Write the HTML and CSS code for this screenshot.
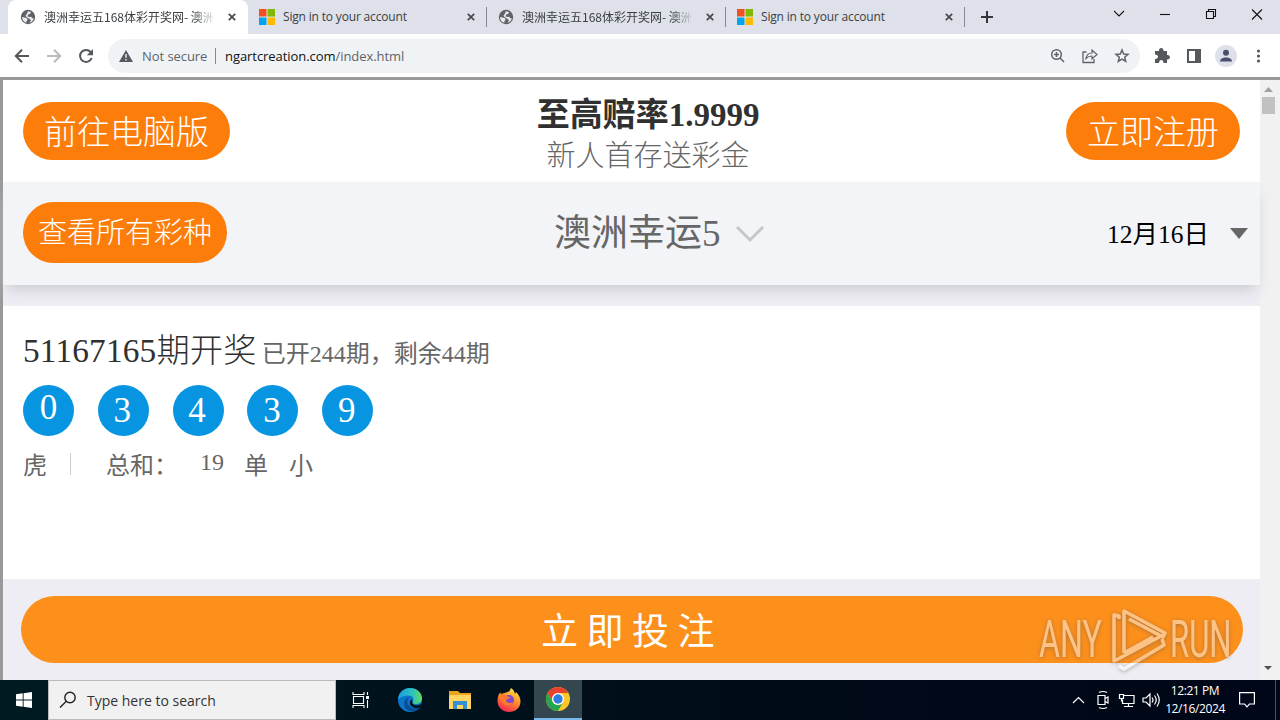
FILE: index.html
```html
<!DOCTYPE html>
<html lang="zh">
<head>
<meta charset="utf-8">
<title>澳洲幸运五168体彩开奖网</title>
<link rel="stylesheet" href="styles.css">
</head>
<body>
<svg class="defs" width="0" height="0">
  <symbol id="globe" viewBox="0 0 16 16"><circle cx="8" cy="8" r="7.2" fill="#5f6368"/><path d="M2.200 8 4.500 8.600 7 9.200 7.600 11 6.400 12 6.400 13.800C3.800 13 2 11 2.200 8ZM8 2.200 11 3 10 5 8 5.500 7.600 7.500 9.500 8 11.500 7.700 12 9.300 13.800 9.300C13.200 12 11.500 13.500 9.500 13.800L11 11.500 9.500 9.800 7 8.500 5.500 6.800 7 4.500Z" fill="#e8eaed"/></symbol>
  <symbol id="ms" viewBox="0 0 16 16"><path d="M0 0h7.500v7.500H0z" fill="#f25022"/><path d="M8.500 0H16v7.500H8.500z" fill="#7fba00"/><path d="M0 8.500h7.500V16H0z" fill="#00a4ef"/><path d="M8.500 8.500H16V16H8.500z" fill="#ffb900"/></symbol>
  <symbol id="x" viewBox="0 0 8 8"><path d="M.8.800 7.200 7.200M7.200.8.800 7.200" stroke="#45494d" stroke-width="1.700"/></symbol>
</svg>

<header class="tabs">
  <div class="tab active"><svg class="fav"><use href="#globe"/></svg><span class="title cjk">澳洲幸运五168体彩开奖网- 澳洲</span><svg class="close"><use href="#x"/></svg></div>
  <div class="tab"><svg class="fav"><use href="#ms"/></svg><span class="title">Sign in to your account</span><svg class="close"><use href="#x"/></svg></div>
  <div class="tab"><svg class="fav"><use href="#globe"/></svg><span class="title cjk">澳洲幸运五168体彩开奖网- 澳洲</span><svg class="close"><use href="#x"/></svg></div>
  <div class="tab"><svg class="fav"><use href="#ms"/></svg><span class="title">Sign in to your account</span><svg class="close"><use href="#x"/></svg></div>
  <svg class="plus" viewBox="0 0 12 12"><path d="M6 0v12M0 6h12" stroke="#33373b" stroke-width="2"/></svg>
  <svg class="winctl" width="166" height="34" viewBox="0 0 166 34" fill="none" stroke="#111" stroke-width="1.100"><path d="M0 11l5 5 5-5"/><path d="M46 14.500h10"/><path d="M92.500 11.500h7v7h-7zM94.500 11.500v-2h7v7h-2"/><path d="M138 9.500l10 10M148 9.500l-10 10"/></svg>
</header>

<nav class="toolbar">
  <svg class="navicons" width="80" height="20" viewBox="0 0 80 20" fill="none" stroke-width="2"><path d="M15 10H2M8 3.800 1.800 10 8 16.200" stroke="#54585c"/><path d="M33 10h13M40 3.800 46.200 10 40 16.200" stroke="#b9bbbe"/><path d="M77 6.500A6 6 0 1 0 77.700 12" stroke="#54585c"/><path d="M79 3v6.200h-6.200z" fill="#54585c"/></svg>
  <div class="omni">
    <svg width="14" height="12" viewBox="0 0 14 12"><path d="M7 0l7 12H0z" fill="#55595d"/><path d="M7 4v3.800M7 9v1.500" stroke="#f1f3f4" stroke-width="1.400"/></svg>
    <span class="secure">Not secure</span><i class="bar"></i><span class="host">ngartcreation.com</span><span class="path">/index.html</span>
    <svg class="omniicons" width="80" height="16" viewBox="0 0 80 16" fill="none" stroke="#5f6368" stroke-width="1.500"><circle cx="6.500" cy="6.500" r="4.800"/><path d="M10 10l4 4M4 6.500h5M6.500 4v5"/><path d="M36.500 4H33v10.500h11V11" stroke-width="1.300"/><path d="M36 10.500c.5-4 3-5.500 6-5.500V2l5 4.500L42 11V8c-3 0-4.500.8-6 2.500z" stroke-width="1.200"/><path d="M72 2l1.700 4 4.300.4-3.300 2.800 1 4.300-3.700-2.300-3.700 2.300 1-4.300-3.300-2.800 4.300-.4z"/></svg>
  </div>
  <svg class="actions" width="110" height="22" viewBox="0 0 110 22"><path d="M1 6h4c-.5-4 5-4 4.500 0H13v4c4-.5 4 5 0 4.500V18H9.500c0-4-4.500-4-4.500 0H1v-4c4 0 4-4.500 0-4.500z" fill="#54585c"/><path d="M34 5h12v12h-12z" fill="none" stroke="#54585c" stroke-width="2"/><path d="M41 5h5v12h-5z" fill="#54585c"/><circle cx="72" cy="11" r="11" fill="#dee1e9"/><circle cx="72" cy="7.800" r="3" fill="#4a4e6a"/><path d="M66 16.500c0-5.500 12-5.500 12 0z" fill="#4a4e6a"/><g fill="#54585c"><circle cx="104.500" cy="6" r="1.600"/><circle cx="104.500" cy="11" r="1.600"/><circle cx="104.500" cy="16" r="1.600"/></g></svg>
</nav>

<main class="frame">
  <div class="page">
    <section class="top">
      <a class="pill desktop">前往电脑版</a>
      <div class="promo"><b>至高赔率1.9999</b><span>新人首存送彩金</span></div>
      <a class="pill register">立即注册</a>
    </section>
    <section class="picker">
      <a class="pill all">查看所有彩种</a>
      <div class="lottery">澳洲幸运5<svg width="28" height="18" viewBox="0 0 28 18"><path d="M1 2l13 13L27 2" fill="none" stroke="#c6c7c9" stroke-width="3"/></svg></div>
      <div class="date">12月16日<svg width="18" height="12" viewBox="0 0 18 12"><path d="M0 0h18L9 11z" fill="#666"/></svg></div>
    </section>
    <section class="draw">
      <div class="issue"><span>51167165期开奖</span><small>已开244期，剩余44期</small></div>
      <div class="balls"><i class="zero">0</i><i>3</i><i>4</i><i>3</i><i>9</i></div>
      <div class="stats"><span class="tiger">虎</span><em></em><span class="sum">总和：</span><span class="num">19</span><span class="odd">单</span><span>小</span></div>
    </section>
    <section class="bet"><a>立即投注</a></section>
  </div>
  <aside class="scroll"><svg width="9" height="5" viewBox="0 0 9 5"><path d="M0 5 4.500 0 9 5z" fill="#a0a0a0"/></svg><i></i><svg class="down" width="8" height="4" viewBox="0 0 8 4"><path d="M0 0h8L4 4z" fill="#505050"/></svg></aside>
  <div class="watermark"><span class="any">ANY</span>
    <svg width="58" height="66" viewBox="0 0 58 66" fill="none" stroke="#fff" stroke-width="3.500" stroke-linejoin="round"><path d="M10 12V9L5 8v46l6-3L54 28M15 46V4L56 26l-2 4-34-18M15 46 44 30M10 59l5 3 40-24-2-6"/></svg>
    <span class="run">RUN</span></div>
</main>

<footer class="taskbar">
  <div class="start"><svg width="16" height="16" viewBox="0 0 16 16"><path d="M0 2.300 6.700 1.300v6.300H0zM7.600 1.200 16 0v7.600H7.600zM0 8.500h6.700v6.300L0 13.800zM7.600 8.500H16V16l-8.400-1.200z" fill="#fff"/></svg></div>
  <div class="search"><svg width="18" height="18" viewBox="0 0 18 18" fill="none" stroke="#222" stroke-width="1.400"><circle cx="11" cy="6.500" r="5.200"/><path d="M7.300 10.300 1 16.600"/></svg><span>Type here to search</span></div>
  <div class="app"><svg width="18" height="16" viewBox="0 0 18 16" fill="none" stroke="#fff" stroke-width="1.100"><path d="M1.500 4.500h10v7h-10zM1 0v2.500h11V0M1 16v-2.500h11V16M15.500 0v3M15.500 8v8"/><path d="M14 4h3v3h-3z" fill="#fff" stroke="none"/></svg></div>
  <div class="app"><svg width="26" height="26" viewBox="0 0 26 26"><defs><linearGradient id="eg" x1="0" x2="1"><stop stop-color="#1b9de2"/><stop offset=".6" stop-color="#2bc3be"/><stop offset="1" stop-color="#66db5a"/></linearGradient></defs><circle cx="13" cy="13" r="12" fill="#0b76c9"/><path d="M1 12C2 5 7 1 13 1c7 0 12 5 12 10 0 4-3 6-6 6-2 0-4-.5-3.500-2C19 10 12 5 1 12z" fill="url(#eg)"/><path d="M12 10c-3 3-2 9 3 11 3 1 6 0 8-2 .8-.8 1.500 0 1 .8-3 4-8 5.500-12 4-7-3-6-12 0-13.800z" fill="#0a4e94"/><path d="M15.500 15c-1 3 5 4.500 8.500 2l2 1-2 2c-3 2-8 1-10-1-2-3-1-6 1-6.500z" fill="#001721"/></svg></div>
  <div class="app"><svg width="22" height="20" viewBox="0 0 22 20"><path d="M0 1h9l2 2h11v16H0z" fill="#eaa51c"/><path d="M1 5h21v14H0V6z" fill="#ffd563"/><path d="M4 19v-8h14v8h-4v-4H8v4z" fill="#368fd0"/></svg></div>
  <div class="app"><svg width="24" height="26" viewBox="0 0 24 26"><defs><linearGradient id="ff" x1=".8" y1="0" x2=".3" y2="1"><stop stop-color="#fff04a"/><stop offset=".45" stop-color="#ff9328"/><stop offset="1" stop-color="#f52454"/></linearGradient></defs><path d="M14 1c3 2 3.500 4 4 6l1-2c3 3 4.500 6 4.500 9.500C23.500 21 18 25 12 25S.5 20.500.5 14c0-4 1-7 3-9v3c1-1 2-2 4-2 2-1 4.500-1 5-2z" fill="url(#ff)"/><circle cx="12" cy="13" r="5" fill="#8047cf"/><path d="M3 7c3-1 5 1 6 2l4 1c0 2-4 2-4 3 0 3 4 4 7 2-2 5-10 4-11 0z" fill="#ff7b29"/></svg></div>
  <div class="app current"><svg width="26" height="26" viewBox="0 0 26 26"><circle cx="13" cy="13" r="12" fill="#fcc72b"/><path d="M2.600 7A12 12 0 0 1 23.400 7H13a6 6 0 0 0-5.200 9z" fill="#e9402f"/><path d="M2.600 7A12 12 0 0 0 13 25l5.200-9A6 6 0 0 1 7.800 16z" fill="#27a44e"/><circle cx="13" cy="13" r="6" fill="#fff"/><circle cx="13" cy="13" r="4.700" fill="#2f7de0"/></svg></div>
  <div class="tray">
    <svg width="88" height="20" viewBox="0 0 88 20" fill="none" stroke="#fff" stroke-width="1.200"><path d="M1 13l5.500-5.500L12 13"/><path d="M26 5.500h7v9h-7zM33 8.500l3-1.500v6l-3-1.500M27 2.500q4-2 8 0M27 17.500q4 2 8 0"/><path d="M51.500 5.500H62v8H50.500V9.500M56.500 13.500v3M52 16.500h9M47.500 4.500h4v4h-4zM49.500 8.500v3"/><path d="M71 8h3l4-4v12l-4-4h-3zM80 7.500q2 2.500 0 5M82.500 5.500q3.500 4.500 0 9M85 3.500q4.500 6.500 0 13"/></svg>
    <div class="clock"><span>12:21 PM</span><span>12/16/2024</span></div>
    <svg width="16" height="16" viewBox="0 0 16 16" fill="none" stroke="#fff" stroke-width="1.200"><path d="M.600.600h14.800v11.400h-5L8 14.800 5.600 12h-5z"/></svg>
    <i class="peek"></i>
  </div>
</footer>
</body>
</html>
```
FILE: styles.css
```css
* { box-sizing: border-box; }
body { margin: 0; width: 1280px; height: 720px; overflow: hidden; display: flex; flex-direction: column; background: #fff; font-family: "Open Sans", "Noto Sans CJK SC", sans-serif; }
svg { flex: none; display: block; }
.defs { position: absolute; }
i, em { font-style: normal; }

.tabs { height: 34px; flex: none; display: flex; background: #dee1e9; padding-left: 8px; }
.tab { width: 239px; flex: none; height: 34px; padding-left: 12px; display: flex; align-items: center; position: relative; }
.tab:not(.active)::after { content: ""; position: absolute; right: -1px; top: 7px; width: 1px; height: 20px; background: #85888f; }
.tab.active { background: #fff; border-radius: 8px 8px 0 0; width: 240px; margin-right: -1px; }
.fav { width: 16px; height: 16px; }
.title { width: 169px; margin-left: 8px; font-size: 12px; line-height: 18px; color: #3c4043; white-space: nowrap; letter-spacing: -.17px; }
.title.cjk { font-family: "Noto Sans CJK SC", sans-serif; letter-spacing: 0; mask-image: linear-gradient(90deg, #000 88%, transparent 102%); }
.close { width: 8px; height: 8px; margin-left: 15px; }
.plus { width: 12px; height: 12px; margin: 11px 0 0 17px; }
.winctl { margin-left: 121px; }

.toolbar { height: 43px; flex: none; display: flex; align-items: center; padding-left: 14px; }
.omni { width: 1032px; height: 34px; margin-left: 14px; padding: 0 10px 0 11px; border-radius: 17px; background: #f0f3f6; display: flex; align-items: center; font-size: 13px; letter-spacing: -.06px; color: #5f6368; }
.secure { margin-left: 9px; width: 67px; white-space: nowrap; }
.bar { width: 1px; height: 16px; background: #85888b; margin: 0 9px 0 6px; }
.host { color: #111; }
.omniicons { margin-left: auto; }
.actions { margin-left: 14px; }

.frame { height: 603px; flex: none; border-top: 3px solid #999; border-left: 3px solid #999; display: flex; position: relative; background: #f1f1f2; }
.page { width: 1257px; display: flex; flex-direction: column; background: #eeedf3; font-family: "Liberation Serif", "Noto Sans CJK SC", serif; font-weight: 300; }
.top { height: 102px; background: #fff; display: flex; align-items: flex-start; justify-content: space-between; padding: 22px 20px 0; }
.pill { background: #fd7d0b; color: #fff; border-radius: 31px; display: block; text-align: center; white-space: nowrap; font-size: 33px; }
.desktop { width: 207px; height: 58px; line-height: 62px; }
.register { width: 174px; height: 58px; line-height: 62px; }
.promo { display: flex; flex-direction: column; align-items: center; margin: -8px 18px 0 18px; }
.promo b { font-size: 33px; line-height: 42px; color: #303030; font-weight: 700; }
.promo span { font-size: 29px; line-height: 40px; color: #666; }
.picker { height: 103px; flex: none; background: #f2f4f7; box-shadow: 0 8px 14px -4px #c8c8d0; display: flex; align-items: flex-start; padding: 20px 12px 0 20px; }
.all { width: 204px; height: 61px; line-height: 62px; font-size: 29px; }
.lottery { font-size: 37px; font-weight: 400; line-height: 64px; color: #666; display: flex; align-items: center; gap: 15px; margin-left: 327px; }
.date { font-size: 25.500px; font-weight: 400; line-height: 66px; color: #000; display: flex; align-items: center; gap: 21px; margin-left: auto; }
.date svg { margin-top: -2px; }
.draw { margin-top: 21px; height: 273px; background: #fff; padding: 20px; color: #666; }
.issue { height: 49px; display: flex; align-items: baseline; line-height: 50px; white-space: nowrap; }
.issue span { font-size: 33.300px; letter-spacing: .18px; color: #303030; }
.issue small { font-size: 24px; margin-left: 5px; font-weight: 400; }
.balls { display: flex; gap: 23.800px; margin-top: 10px; }
.balls i { width: 51px; height: 51px; border-radius: 50%; background: #0795e2; color: #fff; text-align: center; font-size: 35px; line-height: 52px; padding-right: 2px; }
.balls .zero { line-height: 46px; padding-right: 0; }
.stats { display: flex; height: 58px; line-height: 58px; font-size: 24px; font-weight: 400; align-items: center; }
.stats span { margin-top: 2px; }
.stats em { width: 1px; height: 22px; background: #ccc; margin: -2px 35px 0 23px; }
.sum { width: 94px; }
.stats .num { width: 44px; margin-top: -6px; }
.odd { width: 45px; }
.bet { flex: 1; padding: 17px 17px 17px 18px; }
.bet a { display: block; height: 67px; line-height: 74px; border-radius: 34px; background: #fd8f1b; color: #fff; text-align: center; font-size: 37px; font-weight: 400; letter-spacing: 8.500px; }
.scroll { flex: 1; display: flex; flex-direction: column; align-items: flex-start; padding: 7px 0 10px 2px; }
.scroll svg { margin-left: 2px; }
.scroll i { width: 13px; height: 17px; background: #c1c1c1; margin-top: 5px; }
.scroll .down { margin-top: auto; }
.watermark { position: absolute; left: 1036px; top: 527px; width: 194px; height: 66px; display: flex; align-items: center; opacity: .47; color: #fff; font: 400 51px/70px Roboto, sans-serif; filter: drop-shadow(0 1px 2px #555); }
.watermark span { width: 70px; transform-origin: left; transform: scaleX(.63); white-space: nowrap; }
.watermark svg { width: 58px; }
.watermark .run { margin-left: 3px; transform: scaleX(.61); }

.taskbar { height: 40px; flex: none; display: flex; background: linear-gradient(90deg, #001b23, #000b18 60%, #000718); position: relative; z-index: 1; }
.start { width: 48px; display: flex; align-items: center; justify-content: center; }
.search { width: 288px; background: #f1f1f1; border: 1px solid #bbb; display: flex; align-items: center; padding-left: 10px; gap: 10px; font-size: 14px; color: #333; line-height: 38px; }
.search span { margin-top: 2px; }
.app { width: 49.500px; display: flex; align-items: center; justify-content: center; }
.current { width: 48px; background: #34464e; border-bottom: 2px solid #76b9ed; }
.tray { margin-left: auto; width: 208px; display: flex; align-items: center; }
.clock { width: 58px; margin: 0 15px 0 6px; display: flex; flex-direction: column; align-items: center; color: #fff; font-size: 12px; line-height: 18px; letter-spacing: -.4px; white-space: nowrap; }
.peek { width: 1px; height: 40px; margin: 0 4px 0 auto; background: #4b535c; }
```
